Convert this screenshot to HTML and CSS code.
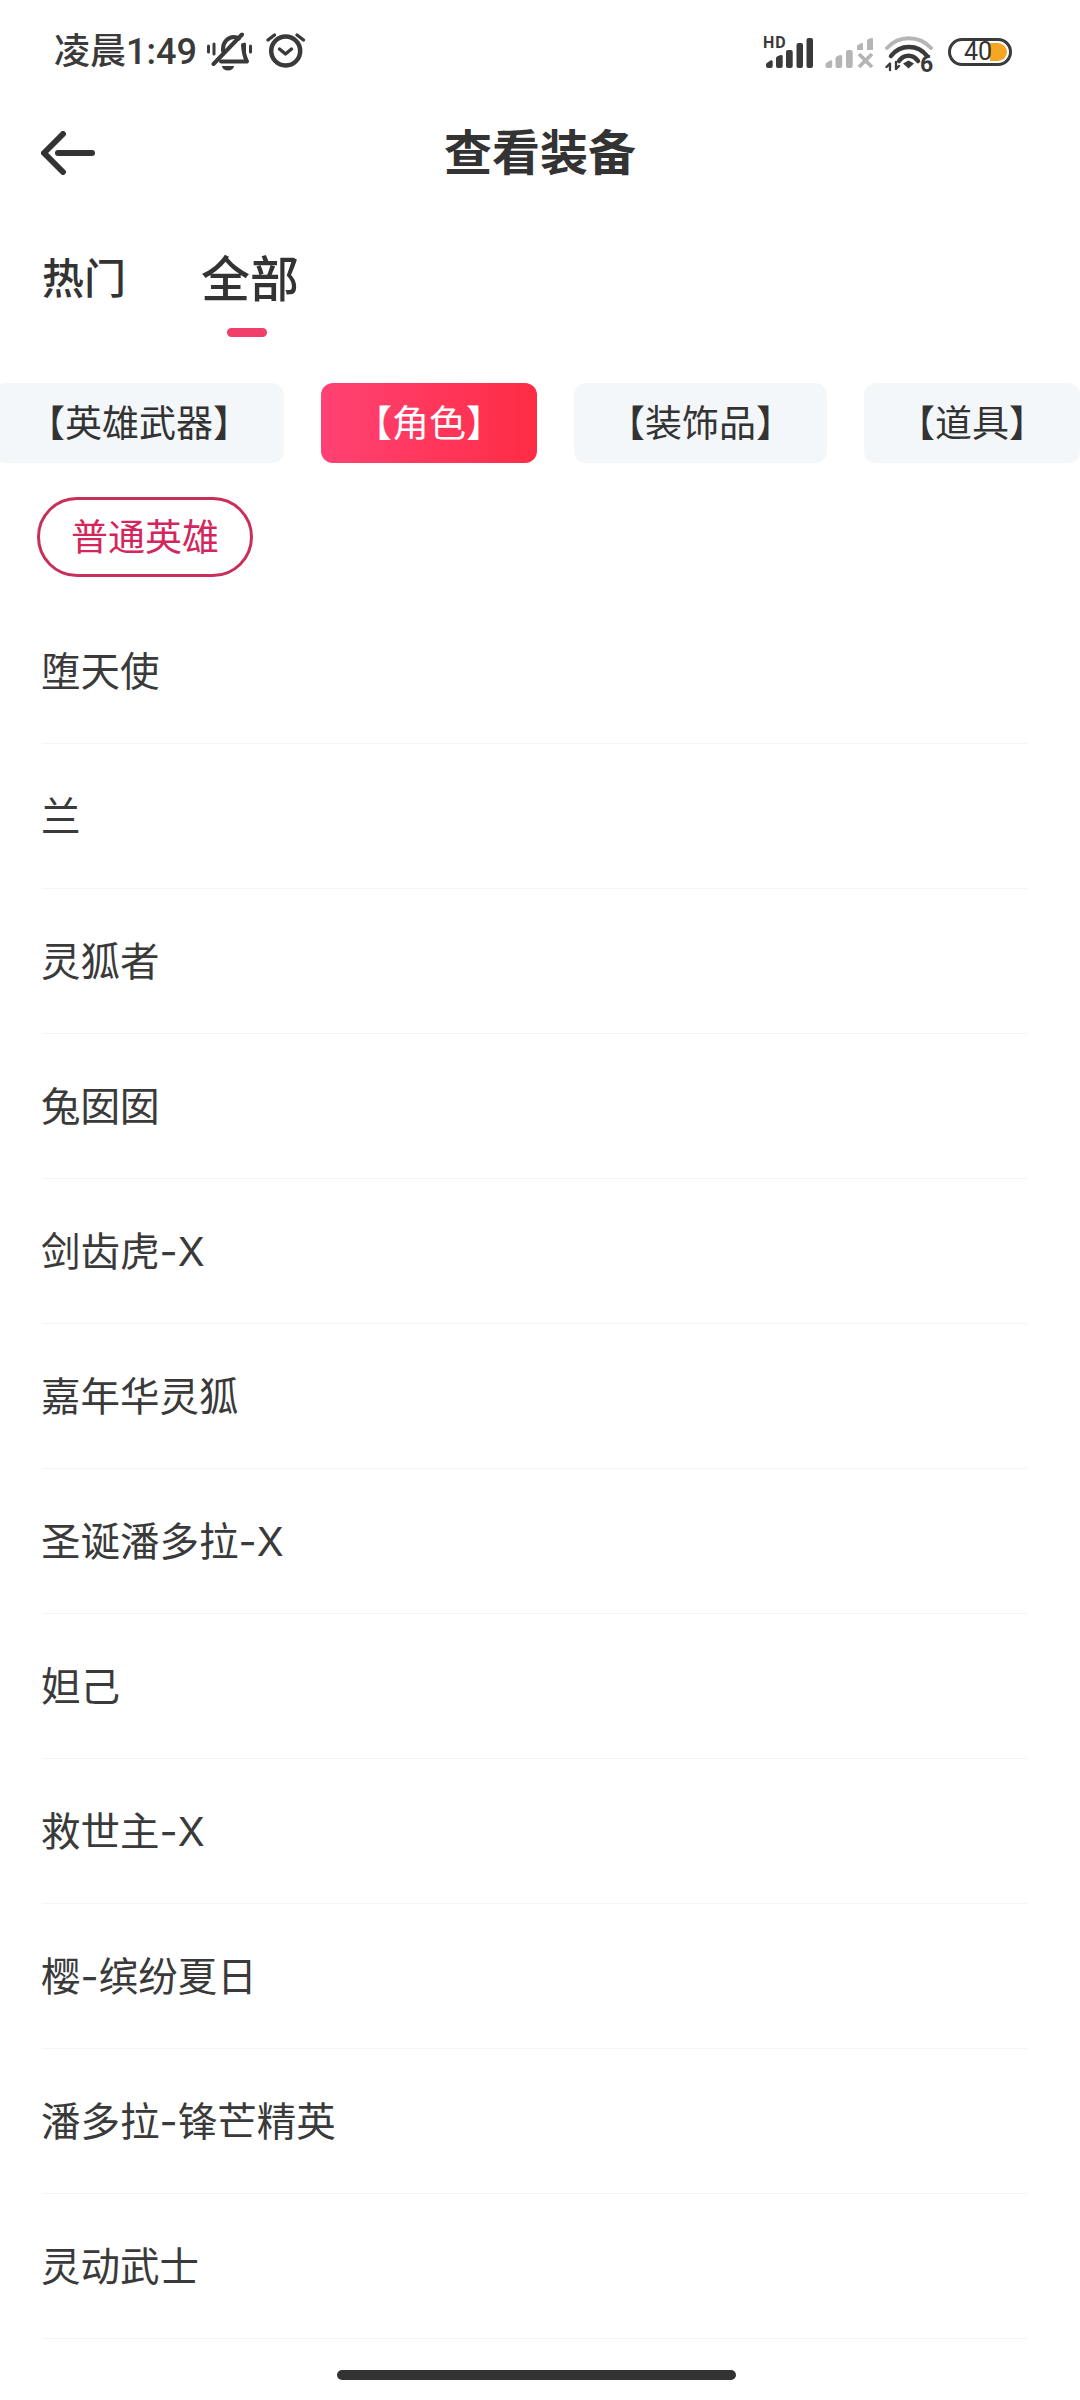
FILE: index.html
```html
<!DOCTYPE html>
<html lang="zh-CN">
<head>
    <meta charset="UTF-8">
    <meta name="viewport" content="width=device-width, initial-scale=1.0">
    <title>查看装备</title>
    <link rel="stylesheet" href="styles.css">
</head>
<body>

    <div class="status-bar">
        <div class="status-left">
            <span class="status-time">凌晨1:49</span>
            <svg class="icon-bell" width="46" height="40" viewBox="207 33 46 40" fill="none" stroke="#3a3a3a" stroke-width="4" stroke-linecap="round" stroke-linejoin="round">
                <path d="M208.500 47v6M214 45v10M244.500 45v10M250.500 47v6" stroke-width="3"/>
                <path d="M213.500 65L242 35.500"/>
                <path d="M223 52v-2c0-7 5-12 11-12c2 0 3.500.5 5 1.500"/>
                <path d="M243 46c.5 7 1 11 4 16.500H221"/>
                <path d="M222 67h12a6 4.500 0 0 1-12 0z" fill="#3a3a3a" stroke="none"/>
            </svg>
            <svg class="icon-alarm" width="42" height="40" viewBox="265 33 42 40" fill="none" stroke="#3a3a3a" stroke-width="4.500" stroke-linecap="round" stroke-linejoin="round">
                <circle cx="285.700" cy="52" r="14.500"/>
                <path d="M279.500 50l6 5l6-5" stroke-width="3.400"/>
                <path d="M268 41l6.500-5M303.500 41l-6.500-5" stroke-width="3.400"/>
            </svg>
        </div>
        <div class="status-right">
            <svg width="51" height="48" viewBox="762 28 51 48" fill="#3a3a3a">
                <text class="status-hd" x="762" y="48">HD</text>
                <path d="M765 65c0-1 .5-2 1.500-2.500l3-2c1-.7 2.200 0 2.200 1.200V66a2 2 0 0 1-2 2H767a2 2 0 0 1-2-2zM775 58.500c0-1 .5-1.800 1.500-2.300l3-1.200c1-.4 2.200.3 2.200 1.500V66a2 2 0 0 1-2 2H777a2 2 0 0 1-2-2z"/>
                <rect x="785" y="50" width="6.700" height="18" rx="2"/>
                <rect x="795.500" y="43" width="6.500" height="25" rx="2"/>
                <rect x="805.500" y="38" width="6.500" height="30" rx="2"/>
            </svg>
            <svg width="49" height="48" viewBox="824 28 49 48" fill="#b5b5b5">
                <path d="M824.500 65c0-1 .5-2 1.500-2.500l3-2c1-.7 2.200 0 2.200 1.200V66a2 2 0 0 1-2 2h-2.700a2 2 0 0 1-2-2zM834.500 58.500c0-1 .5-1.800 1.500-2.300l3-1.200c1-.4 2.200.3 2.200 1.500V66a2 2 0 0 1-2 2h-2.700a2 2 0 0 1-2-2z"/>
                <rect x="845" y="50" width="6.700" height="18" rx="2"/>
                <path d="M856 46.500c0-1 .5-1.500 1.500-2l3-1.500c.5-.2 1.500 0 1.500 1v6h-6zM866 41c0-1 .5-1.500 1.500-2l3-1c.5-.2 1.500 0 1.500 1v11h-6z"/>
                <path d="M858 54l13 13M871 54l-13 13" stroke="#b5b5b5" stroke-width="3.800" fill="none"/>
            </svg>
            <svg width="50" height="56" viewBox="885 24 50 56" fill="none" stroke="#3a3a3a" stroke-linecap="round">
                <path d="M887 48c12-13 32-13 44 0" stroke="#b5b5b5" stroke-width="3.800"/>
                <path d="M891 56c9-12 27-12 36 0" stroke-width="4.500"/>
                <path d="M899 61c5-7 14-7 19 0" stroke-width="4.500"/>
                <path d="M903 63.500l5.500-3l5.500 3l-5.500 5z" fill="#3a3a3a" stroke="none"/>
                <path d="M890 70v-6M886.500 67l3.500-3.500M896 62v7M899 66l-3 3" stroke-width="2.400"/>
                <text class="status-six" x="920" y="72">6</text>
            </svg>
            <div class="battery">
                <div class="battery-fill"></div>
                <span class="battery-num">40</span>
            </div>
        </div>
    </div>

    <div class="nav-bar">
        <svg class="nav-back" width="56" height="44" viewBox="0 0 56 44" fill="none" stroke="#333" stroke-width="6" stroke-linecap="round" stroke-linejoin="round">
            <path d="M22 3L3 22l19 19"/>
            <path d="M17 22h34"/>
        </svg>
        <h1 class="nav-title">查看装备</h1>
    </div>

    <div class="tabs">
        <div class="tab">热门</div>
        <div class="tab tab-active">全部</div>
    </div>

    <div class="chips">
        <div class="chip">【英雄武器】</div>
        <div class="chip chip-active">【角色】</div>
        <div class="chip">【装饰品】</div>
        <div class="chip">【道具】</div>
    </div>

    <div class="pill">普通英雄</div>

    <ul class="hero-list">
        <li>堕天使</li>
        <li>兰</li>
        <li>灵狐者</li>
        <li>兔囡囡</li>
        <li>剑齿虎-X</li>
        <li>嘉年华灵狐</li>
        <li>圣诞潘多拉-X</li>
        <li>妲己</li>
        <li>救世主-X</li>
        <li>樱-缤纷夏日</li>
        <li>潘多拉-锋芒精英</li>
        <li>灵动武士</li>
    </ul>

    <div class="home-bar"></div>

</body>
</html>
```

FILE: styles.css
```css
body {
    position: relative;
    width: 1080px;
    height: 2400px;
    margin: 0;
    overflow: hidden;
    background-color: #FFFFFF;
    color: #333;
    font-family: "Noto Sans CJK SC", "Noto Sans", sans-serif;
}

.status-bar {
    display: flex;
    justify-content: space-between;
    align-items: center;
    height: 104px;
    padding: 0 68px 0 54px;
    box-sizing: border-box;
}

.status-left,
.status-right {
    display: flex;
    align-items: center;
}

.status-time {
    font-family: Roboto, "Noto Sans CJK SC", sans-serif;
    font-size: 36px;
    font-weight: 500;
    line-height: 40px;
    color: #3a3a3a;
    margin: 0 10px 0 0;
}

.icon-alarm {
    margin-left: 12px;
}

.status-right {
    gap: 11px;
}

.status-hd {
    font-family: Roboto, sans-serif;
    font-size: 16px;
    font-weight: 700;
    letter-spacing: 1px;
}

.status-six {
    font-family: Roboto, sans-serif;
    font-size: 23px;
    font-weight: 700;
    fill: #3a3a3a;
    stroke: none;
}

.battery {
    position: relative;
    display: flex;
    align-items: center;
    width: 64px;
    height: 28px;
    margin-left: 2px;
    padding-left: 13px;
    box-sizing: border-box;
    border: 3px solid #3a3a3a;
    border-radius: 14px;
}

.battery-fill {
    position: absolute;
    top: 2px;
    right: 2px;
    width: 17px;
    height: 18px;
    background-color: #f5a623;
    border-radius: 0 9px 9px 0;
}

.battery-num {
    position: relative;
    font-family: Roboto, sans-serif;
    font-size: 25px;
    line-height: 22px;
    color: #333;
}

.nav-bar {
    position: relative;
    display: flex;
    align-items: center;
    justify-content: center;
    height: 98px;
}

.nav-back {
    position: absolute;
    left: 41px;
    top: 27px;
}

.nav-title {
    margin: 0 0 8px;
    font-size: 48px;
    line-height: 60px;
    font-weight: 700;
    color: #333;
}

.tabs {
    display: flex;
    align-items: flex-start;
    gap: 75px;
    height: 181px;
    padding: 44px 0 0 42px;
    box-sizing: border-box;
}

.tab {
    position: relative;
    font-size: 42px;
    font-weight: 500;
    line-height: 60px;
}

.tab-active {
    font-size: 49px;
}

.tab-active::after {
    content: "";
    position: absolute;
    left: 26px;
    top: 82px;
    width: 40px;
    height: 9px;
    background-color: #f0406a;
    border-radius: 5px;
}

.chips {
    display: flex;
    gap: 37px;
    margin-left: -6px;
}

.chip {
    flex-shrink: 0;
    height: 80px;
    padding: 0 34px;
    font-size: 37px;
    line-height: 77px;
    background-color: #f4f7f9;
    border-radius: 12px;
}

.chip-active {
    color: #FFFFFF;
    background: linear-gradient(90deg, #ff4274, #ff2c44);
}

.pill {
    width: fit-content;
    height: 80px;
    margin: 34px 0 22px 37px;
    padding: 0 31px;
    box-sizing: border-box;
    font-size: 37px;
    line-height: 71px;
    color: #d4265c;
    border: 3px solid #c8305a;
    border-radius: 40px;
}

.hero-list {
    margin: 0;
    padding: 0;
    list-style: none;
}

.hero-list li {
    height: 145px;
    margin: 0 53px 0 42px;
    box-sizing: border-box;
    font-family: Inter, "Noto Sans CJK SC", sans-serif;
    font-size: 39.500px;
    line-height: 146px;
    text-indent: -1px;
    color: #3a3a3a;
    border-bottom: 1px solid #f5f5f5;
}

.home-bar {
    position: absolute;
    left: 337px;
    top: 2370px;
    width: 399px;
    height: 10px;
    background-color: #333;
    border-radius: 5px;
}
```
